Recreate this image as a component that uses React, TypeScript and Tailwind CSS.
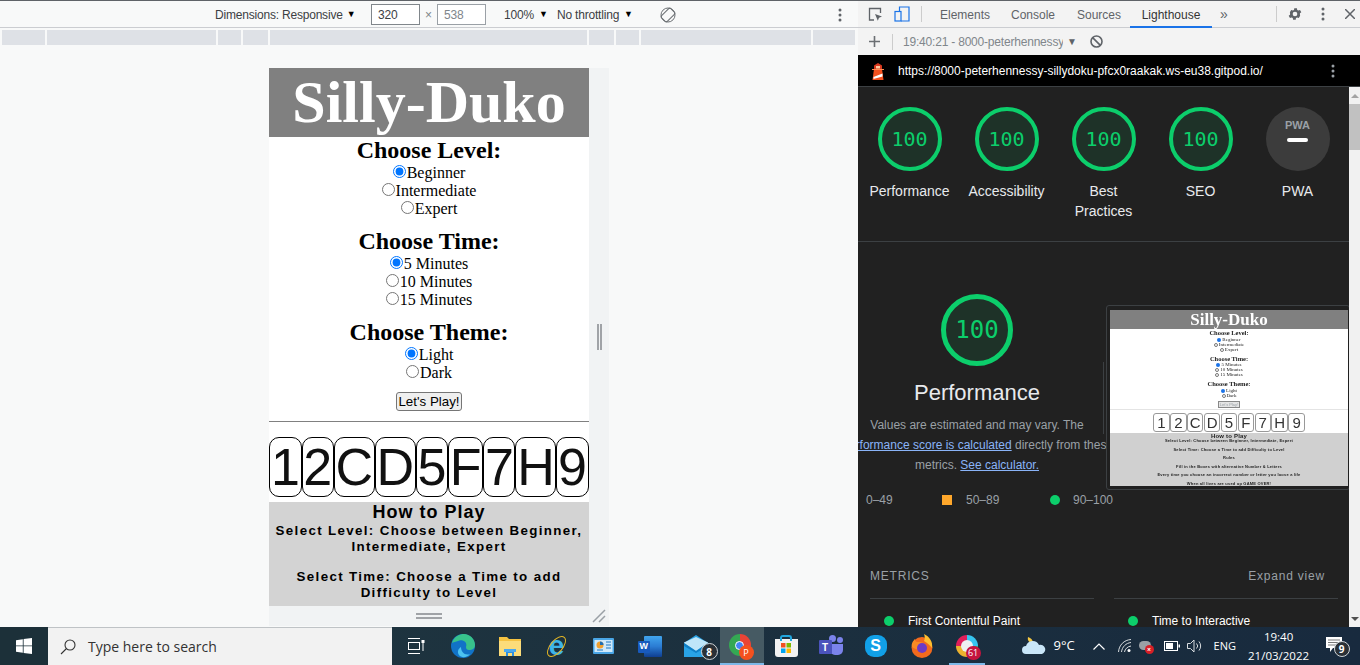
import React from "react";

const Dots = ({ color = "#5f6368" }: { color?: string }) => (
  <svg width="4" height="14" viewBox="0 0 4 14" fill={color}>
    <circle cx="2" cy="2" r="1.5" />
    <circle cx="2" cy="7" r="1.5" />
    <circle cx="2" cy="12" r="1.5" />
  </svg>
);

const Radio = ({ label, checked }: { label: string; checked?: boolean }) => (
  <div className="flex h-[18px] items-center justify-center">
    <input type="radio" checked={!!checked} readOnly className="-mt-[3px] h-[13px] w-[13px]" />
    <span className="ml-[1px]">{label}</span>
  </div>
);

const Group = ({ title, options, className }: { title: string; options: string[]; className?: string }) => (
  <div className={className}>
    <h2 className="h-[27px] text-center text-[24px] font-bold leading-[27px]">{title}</h2>
    {options.map((o, i) => (
      <Radio key={o} label={o} checked={i === 0} />
    ))}
  </div>
);

const tiles = ["1", "2", "C", "D", "5", "F", "7", "H", "9"];

const DevicePage = () => (
  <div className="h-[538px] w-[320px] overflow-hidden bg-white font-['Liberation_Serif',serif] text-[16px] text-black">
    <h1 className="flex h-[69px] items-center justify-center bg-[#808080] text-[60px] font-bold leading-[69px] text-white">
      Silly-Duko
    </h1>
    <Group title="Choose Level:" options={["Beginner", "Intermediate", "Expert"]} />
    <Group className="mt-[10px]" title="Choose Time:" options={["5 Minutes", "10 Minutes", "15 Minutes"]} />
    <Group className="mt-[10px]" title="Choose Theme:" options={["Light", "Dark"]} />
    <div className="mt-[10px] flex justify-center">
      <button className="h-[19px] w-[66px] rounded-[3px] border border-[#767676] bg-[#efefef] font-['Liberation_Sans',sans-serif] text-[13.33px] leading-[15px]">
        Let's Play!
      </button>
    </div>
    <div className="mt-[10px] h-px bg-[#808080]" />
    <div className="mt-[15px] flex h-[60px] justify-center font-['Liberation_Sans',sans-serif] text-[52px] leading-[58px] text-[#111]">
      {tiles.map((t) => (
        <span key={t} className="rounded-[10px] border border-black px-[0.7px] text-center">
          {t}
        </span>
      ))}
    </div>
    <div className="mt-[5px] h-[104px] overflow-hidden bg-[#d3d3d3] text-center font-['Liberation_Sans',sans-serif] font-bold tracking-[1.35px]">
      <h3 className="h-[21px] text-[18px] leading-[20px] tracking-[1px]">How to Play</h3>
      <p className="text-[13.33px] leading-[16px]">
        Select Level: Choose between Beginner,
        <br />
        Intermediate, Expert
      </p>
      <p className="mt-[14px] text-[13.33px] leading-[16px]">
        Select Time: Choose a Time to add
        <br />
        Difficulty to Level
      </p>
    </div>
  </div>
);

const mediaBars = ["w-[43px]", "w-[169px]", "w-[23px]", "w-[25px]", "w-[317px]", "w-[25px]", "w-[23px]", "w-[170px]", "w-[42px]"];

const LeftPane = () => (
  <div className="flex h-full w-[858px] flex-col border-t border-[#5f6368] bg-[#f8f9f9]">
    <div className="flex h-[27px] items-center border-b border-[#cbcdd1] pt-[1px] text-[12px] tracking-[-0.2px] text-[#3c4043]">
      <span className="ml-[215px] flex w-[156px] items-center gap-[4px]">
        Dimensions: Responsive <span className="text-[9px] text-black">▼</span>
      </span>
      <span className="flex h-[21px] w-[49px] items-center border border-[#80868b] bg-white pl-[6px]">320</span>
      <span className="w-[17px] text-center text-[#80868b]">×</span>
      <span className="flex h-[21px] w-[49px] items-center border border-[#9aa0a6] bg-white pl-[6px] text-[#80868b]">538</span>
      <span className="ml-[18px] flex w-[53px] items-center gap-[5px]">
        100% <span className="text-[9px] text-black">▼</span>
      </span>
      <span className="flex w-[103px] items-center gap-[5px]">
        No throttling <span className="text-[9px] text-black">▼</span>
      </span>
      <svg width="16" height="16" viewBox="0 0 16 16" fill="none" stroke="#6b6f73">
        <rect x="4" y="1.5" width="8" height="13" rx="1.5" transform="rotate(45 8 8)" />
        <circle cx="8" cy="8" r="7" />
      </svg>
      <span className="ml-[162px]">
        <Dots />
      </span>
    </div>
    <div className="mt-[2px] flex h-[15px] gap-[2px] pl-[2px]">
      {mediaBars.map((w, i) => (
        <div key={i} className={`${w} bg-[#dee1e6]`} />
      ))}
    </div>
    <div className="ml-[269px] mt-[23px] grid w-[340px] grid-cols-[320px_20px] grid-rows-[538px_20px]">
      <DevicePage />
      <div className="flex items-center justify-center gap-[1px] bg-[#f1f3f4]">
        <span className="h-[26px] w-[2px] bg-[#a0a3a7]" />
        <span className="h-[26px] w-[2px] bg-[#a0a3a7]" />
      </div>
      <div className="flex flex-col items-center justify-center gap-[2px] bg-[#f1f3f4]">
        <span className="h-[2px] w-[26px] bg-[#a0a3a7]" />
        <span className="h-[2px] w-[26px] bg-[#a0a3a7]" />
      </div>
      <div className="flex items-center justify-center bg-[#f1f3f4]">
        <svg width="14" height="14" viewBox="0 0 14 14" stroke="#9aa0a6" strokeWidth="1.5">
          <path d="M1 13 13 1M7 13l6-6" />
        </svg>
      </div>
    </div>
  </div>
);

const Gauge = ({ big }: { big?: boolean }) => (
  <div
    className={
      big
        ? "flex h-[72px] w-[72px] items-center justify-center rounded-full border-[5px] border-[#0cce6b] bg-[#0cce6b]/10 font-['DejaVu_Sans_Mono',monospace] text-[24px] text-[#0cce6b]"
        : "flex h-[64px] w-[64px] items-center justify-center rounded-full border-[4px] border-[#0cce6b] bg-[#0cce6b]/10 font-['DejaVu_Sans_Mono',monospace] text-[20px] text-[#0cce6b]"
    }
  >
    100
  </div>
);

const ScoreCol = ({ label, pwa }: { label: React.ReactNode; pwa?: boolean }) => (
  <div className="flex w-[97px] flex-col items-center">
    {pwa ? (
      <div className="flex h-[64px] w-[64px] flex-col items-center rounded-full bg-[#3c3c3c] pt-[12px]">
        <span className="text-[11px] font-bold leading-[12px] text-[#9aa0a6]">PWA</span>
        <span className="mt-[7px] h-[4px] w-[21px] rounded-full bg-white" />
      </div>
    ) : (
      <Gauge />
    )}
    <div className="mt-[10px] text-center text-[14px] leading-[20px] text-[#e8eaed]">{label}</div>
  </div>
);

const ThumbLine = ({ children, className }: { children: React.ReactNode; className: string }) => (
  <div className={`flex items-center justify-center whitespace-nowrap ${className}`}>{children}</div>
);

const ThumbRadio = ({ label, on }: { label: string; on?: boolean }) => (
  <ThumbLine className="h-[5px] text-[5px] text-[#222]">
    <span className={on ? "mr-[1px] h-[4px] w-[4px] rounded-full bg-[#1a73e8]" : "mr-[1px] h-[4px] w-[4px] rounded-full border-[0.5px] border-[#777]"} />
    {label}
  </ThumbLine>
);

const Thumbnail = () => (
  <div className="absolute left-[248px] top-[218px] h-[185px] w-[244px] rounded-[3px] border border-[#3c4043] bg-[#202020] pl-[3px] pt-[4px]">
    <div className="h-[176px] w-[238px] overflow-hidden bg-white blur-[0.3px]">
      <ThumbLine className="h-[19px] bg-[#808080] font-['Liberation_Serif',serif] text-[17px] font-bold text-white">Silly-Duko</ThumbLine>
      <div className="font-['Liberation_Serif',serif]">
        <ThumbLine className="h-[8px] text-[6.5px] font-bold text-[#222]">Choose Level:</ThumbLine>
        <ThumbRadio label="Beginner" on />
        <ThumbRadio label="Intermediate" />
        <ThumbRadio label="Expert" />
        <ThumbLine className="mt-[2.5px] h-[8px] text-[6.5px] font-bold text-[#222]">Choose Time:</ThumbLine>
        <ThumbRadio label="5 Minutes" on />
        <ThumbRadio label="10 Minutes" />
        <ThumbRadio label="15 Minutes" />
        <ThumbLine className="mt-[2.5px] h-[8px] text-[6.5px] font-bold text-[#222]">Choose Theme:</ThumbLine>
        <ThumbRadio label="Light" on />
        <ThumbRadio label="Dark" />
      </div>
      <ThumbLine className="mt-[3px]">
        <span className="border-[0.5px] border-[#888] bg-[#e4e4e4] px-[1px] font-['Liberation_Sans',sans-serif] text-[4px] leading-[5px]">Let's Play!</span>
      </ThumbLine>
      <div className="mt-[1px] h-px bg-[#e4e4e4]" />
      <div className="mt-[3px] flex h-[19px] justify-center gap-[0.4px] font-['Liberation_Sans',sans-serif] text-[15px] leading-[17px] text-[#333]">
        {tiles.map((t) => (
          <span key={t} className="w-[16.5px] rounded-[3px] border border-[#999] text-center">
            {t}
          </span>
        ))}
      </div>
      <div className="mt-[1px] h-[60px] bg-[#d0d0d0] text-center font-['Liberation_Sans',sans-serif] text-[4px] font-bold leading-[8.5px] tracking-[0.2px] text-[#222]">
        <div className="h-[4px] text-[6px] leading-[6px]">How to Play</div>
        <div>Select Level: Choose between Beginner, Intermediate, Expert</div>
        <div>Select Time: Choose a Time to add Difficulty to Level</div>
        <div>Rules</div>
        <div>Fill in the Boxes with alternative Number &amp; Letters</div>
        <div>Every time you choose an incorrect number or letter you loose a life</div>
        <div>When all lives are used up GAME OVER!</div>
      </div>
    </div>
  </div>
);

const Metric = ({ name }: { name: string }) => (
  <div className="w-[224px] border-t border-[#3c4043] pl-[14px] pt-[14px]">
    <div className="flex items-center gap-[14px] text-[12px] leading-[16px] text-white">
      <span className="h-[10px] w-[10px] rounded-full bg-[#0cce6b]" />
      {name}
    </div>
  </div>
);

const RightPane = () => (
  <div className="flex h-full w-[502px] flex-col border-t border-[#5f6368] font-['Liberation_Sans',sans-serif]">
    {/* devtools tabs */}
    <div className="flex h-[27px] items-center border-b border-[#cbcdd1] bg-[#f3f3f3] text-[12px] text-[#5f6368]">
      <svg className="ml-[10px]" width="15" height="15" viewBox="0 0 15 15" fill="none">
        <path d="M6 13H1.5V1.5h11V6" stroke="#5f6368" strokeWidth="1.3" />
        <path d="M7 7l7 2.5-3 1.2-1.2 3z" fill="#5f6368" />
      </svg>
      <svg className="ml-[11px]" width="16" height="16" viewBox="0 0 16 16" fill="none" stroke="#1a73e8" strokeWidth="1.2">
        <path d="M5.5 5V1h9.5v14H7" />
        <rect x="1" y="5.5" width="6" height="9.5" />
      </svg>
      <span className="ml-[11px] h-[16px] w-px bg-[#ccc]" />
      <span className="ml-[18px] w-[71px] pt-[2px]">Elements</span>
      <span className="w-[66px] pt-[2px]">Console</span>
      <span className="w-[53px] pt-[2px]">Sources</span>
      <span className="flex h-[27px] w-[82px] items-center justify-center border-b-2 border-[#1a73e8] pt-[3px] text-[#333]">Lighthouse</span>
      <span className="ml-[8px] w-[56px] text-[14px] leading-[14px]">»</span>
      <span className="h-[16px] w-px bg-[#ccc]" />
      <svg className="ml-[10px]" width="16" height="16" viewBox="0 0 24 24" fill="#5f6368">
        <path d="M19.4 13a7.6 7.6 0 0 0 0-2l2.1-1.6-2-3.5-2.5 1a7.6 7.6 0 0 0-1.7-1l-.4-2.6h-4l-.4 2.6a7.6 7.6 0 0 0-1.7 1l-2.5-1-2 3.5L4.600 11a7.600 7.600 0 0 0 0 2l-2.100 1.600 2 3.500 2.500-1a7.600 7.600 0 0 0 1.700 1l.4 2.600h4l.4-2.600a7.600 7.600 0 0 0 1.700-1l2.500 1 2-3.500zM12 15.500a3.500 3.500 0 1 1 0-7 3.500 3.500 0 0 1 0 7z" />
      </svg>
      <span className="ml-[18px]">
        <Dots />
      </span>
      <svg className="ml-[20px]" width="10" height="10" viewBox="0 0 10 10" stroke="#5f6368" strokeWidth="1.5">
        <path d="M0 0l10 10M10 0 0 10" />
      </svg>
    </div>
    {/* report picker */}
    <div className="flex h-[27px] items-center bg-[#f3f3f3] text-[12px] text-[#80868b]">
      <svg className="ml-[11px]" width="11" height="11" viewBox="0 0 11 11" stroke="#6b6f73" strokeWidth="1.6">
        <path d="M5.500 0v11M0 5.500h11" />
      </svg>
      <span className="ml-[12px] h-[16px] w-px bg-[#ccc]" />
      <span className="ml-[10px] w-[160px] overflow-hidden whitespace-nowrap tracking-[-0.2px]">19:40:21 - 8000-peterhennessy</span>
      <span className="ml-[4px] text-[10px] text-[#5f6368]">▼</span>
      <svg className="ml-[13px]" width="13" height="13" viewBox="0 0 13 13" fill="none" stroke="#5f6368" strokeWidth="1.6">
        <circle cx="6.500" cy="6.500" r="5.500" />
        <path d="M2.600 2.600l7.800 7.800" />
      </svg>
    </div>
    {/* url bar */}
    <div className="flex h-[32px] items-center border-b border-[#3c4043] bg-black text-[12px] text-white">
      <svg className="ml-[13px]" width="14" height="18" viewBox="0 0 14 18">
        <path d="M1.500 18 3 7h8l1.500 11z" fill="#f4511e" />
        <path d="M3 7V3.500L7 1l4 2.500V7z" fill="#d9381e" />
        <rect x="5" y="4" width="4" height="2.500" fill="#ffca9e" />
        <path d="M1 7h12v1H1z" fill="#ff8a50" />
        <path d="M2.500 15 11.500 11.500v3L2.500 17z" fill="#fff" />
      </svg>
      <span className="ml-[13px] w-[433px] whitespace-nowrap">https://8000-peterhennessy-sillydoku-pfcx0raakak.ws-eu38.gitpod.io/</span>
      <Dots color="#9aa0a6" />
    </div>
    {/* report */}
    <div className="flex min-h-0 flex-1">
      <div className="relative w-[491px] overflow-hidden bg-[#212121] text-[#9aa0a6]">
        <div className="flex h-[155px] border-b border-[#3c4043] pl-[3px] pt-[20px]">
          <ScoreCol label="Performance" />
          <ScoreCol label="Accessibility" />
          <ScoreCol
            label={
              <>
                Best
                <br />
                Practices
              </>
            }
          />
          <ScoreCol label="SEO" />
          <ScoreCol label="PWA" pwa />
        </div>
        <div className="flex w-[238px] flex-col items-center pt-[52px]">
          <Gauge big />
          <div className="mt-[14px] text-[22px] leading-[26px] text-[#e8eaed]">Performance</div>
          <div className="mt-[9px] w-full text-[12px] leading-[20px]">
            <div className="flex justify-center whitespace-nowrap">Values are estimated and may vary. The</div>
            <div className="flex justify-center whitespace-nowrap">
              <span>
                <a className="text-[#8ab4f8] underline">Performance score is calculated</a> directly from these
              </span>
            </div>
            <div className="flex justify-center whitespace-nowrap">
              <span>
                metrics. <a className="text-[#8ab4f8] underline">See calculator.</a>
              </span>
            </div>
          </div>
        </div>
        <div className="mt-[15px] flex h-[20px] items-center whitespace-nowrap pl-[8px] text-[12px]">
          <span className="w-[76px]">0–49</span>
          <span className="h-[10px] w-[10px] bg-[#ffa72b]" />
          <span className="ml-[14px] w-[84px]">50–89</span>
          <span className="h-[10px] w-[10px] rounded-full bg-[#0cce6b]" />
          <span className="ml-[13px]">90–100</span>
        </div>
        <div className="mt-[57px] flex items-center justify-between pl-[12px] pr-[24px] text-[12px] leading-[18px] tracking-[0.8px] text-[#9aa0a6]">
          <span>METRICS</span>
          <span>Expand view</span>
        </div>
        <div className="ml-[12px] mt-[13px] flex gap-[20px]">
          <Metric name="First Contentful Paint" />
          <Metric name="Time to Interactive" />
        </div>
        <div className="absolute left-[245px] top-[275px] h-[72px] w-px bg-[#3c4043]" />
        <Thumbnail />
      </div>
      <div className="flex w-[11px] flex-col justify-between bg-[#f1f1f1]">
        <div>
          <div className="flex h-[17px] items-center justify-center">
            <span className="border-x-[4px] border-b-[4px] border-x-transparent border-b-[#a3a3a3]" />
          </div>
          <div className="h-[46px] bg-[#c1c1c1]" />
        </div>
        <div className="flex h-[17px] items-center justify-center">
          <span className="border-x-[4px] border-t-[4px] border-x-transparent border-t-[#505050]" />
        </div>
      </div>
    </div>
  </div>
);

const Badge = ({ n, className }: { n: string; className?: string }) => (
  <span className={`absolute flex items-center justify-center rounded-full border border-[#cfd4d8] bg-[#2a3036] text-[10px] font-bold leading-none text-white ${className ?? ""}`}>
    {n}
  </span>
);

const Cell = ({ children, className }: { children: React.ReactNode; className: string }) => (
  <div className={`relative flex h-full items-center justify-center ${className}`}>{children}</div>
);

const Taskbar = () => (
  <div className="flex h-[38px] items-center bg-gradient-to-r from-[#20373f] to-[#182a3e] font-['Open_Sans',sans-serif] text-white">
    <div className="flex h-full w-[48px] items-center justify-center bg-[#1c3039]">
      <svg width="16" height="16" viewBox="0 0 16 16" fill="#fff">
        <path d="M0 2.200 6.800 1.200V7.500H0zM7.600 1.100 16 0v7.500H7.600zM0 8.300h6.800v6.500L0 13.800zM7.600 8.300H16V16l-8.400-1.100z" />
      </svg>
    </div>
    <div className="flex h-full w-[344px] items-center border-t border-[#bfc3c6] bg-[#f2f2f2] pl-[12px] text-[14px] text-[#333]">
      <svg width="16" height="16" viewBox="0 0 16 16" fill="none" stroke="#333" strokeWidth="1.100">
        <circle cx="10" cy="6" r="5" />
        <path d="M6.500 9.500 1 15" />
      </svg>
      <span className="ml-[12px]">Type here to search</span>
    </div>
    <div className="flex h-full w-[48px] items-center justify-center">
      <svg width="17" height="16" viewBox="0 0 17 16" fill="none" stroke="#fff">
        <path d="M0 .5h12M0 15.500h12M15 3v10" />
        <rect x=".5" y="4.500" width="11" height="7" />
        <rect x="13.500" y="2" width="3" height="3" fill="#fff" stroke="none" />
      </svg>
    </div>
    <Cell className="w-[46.6px]">
      <svg width="24" height="24" viewBox="0 0 24 24">
        <circle cx="12" cy="12" r="12" fill="#1173c7" />
        <path d="M1 9C3 2 9 0 13 0c6 0 11 5 11 11 0 4-3 5-6 5-2 0-3-1-3-3 2-5-4-8-8-6-2 1-5 1-6 2z" fill="#38c28b" />
        <path d="M10 13c0 5 4 9 9 7-3 4-9 4-11 1-2-3-1-6 2-8z" fill="#4cc2f0" />
      </svg>
    </Cell>
    <Cell className="w-[46.6px]">
      <svg width="22" height="20" viewBox="0 0 22 20">
        <path d="M0 1h8l2 2h12v17H0z" fill="#f5c342" />
        <path d="M0 5h22v15H0z" fill="#fbdc7a" />
        <path d="M7 20v-7h8v7h-2v-3H9v3z" fill="#2c8fe0" />
        <path d="M5 13h12v3H5z" fill="#4aa8ee" />
      </svg>
    </Cell>
    <Cell className="w-[46.6px]">
      <div className="relative flex h-[24px] w-[24px] items-center justify-center">
        <span className="absolute h-[25px] w-[13px] rotate-[40deg] rounded-[50%] border border-[#e8b923]" />
        <span className="font-['Liberation_Sans',sans-serif] text-[28px] font-bold leading-[24px] text-[#3db4e8]">e</span>
      </div>
    </Cell>
    <Cell className="w-[46.6px]">
      <svg width="21" height="16" viewBox="0 0 21 16">
        <rect width="21" height="16" rx="1" fill="#4aa6e6" />
        <rect x="1.500" y="2" width="18" height="12" fill="#cfe9fa" />
        <circle cx="7" cy="7" r="3.500" fill="#f0a030" />
        <path d="M7 7V3.500A3.500 3.500 0 0 1 10.500 7z" fill="#1f6fb5" />
        <path d="M13 4h5M13 7h5M13 10h5M4 12h6" stroke="#1f78c2" />
      </svg>
    </Cell>
    <Cell className="w-[46.6px]">
      <div className="relative h-[21px] w-[24px]">
        <div className="absolute right-0 top-0 h-[21px] w-[18px] rounded-[1px] bg-gradient-to-b from-[#41a5ee] via-[#2b7cd3] to-[#103f91]" />
        <div className="absolute left-0 top-[5px] flex h-[12px] w-[12px] items-center justify-center rounded-[1px] bg-[#185abd] font-['Liberation_Sans',sans-serif] text-[9px] font-bold text-white">W</div>
      </div>
    </Cell>
    <Cell className="w-[46.6px]">
      <svg width="24" height="22" viewBox="0 0 24 22">
        <path d="M0 8 12 0l12 8v14H0z" fill="#29a3e6" />
        <path d="M0 8l12 8 12-8v-.5L12 2 0 7.500z" fill="#bfe6f9" />
        <path d="M0 8l12 8 12-8v3l-12 7L0 11z" fill="#0f7fc6" />
      </svg>
      <Badge n="8" className="bottom-[5px] right-[2px] h-[17px] w-[17px]" />
    </Cell>
    <Cell className="w-[44px] border-b-2 border-[#7cb8e8] bg-[#465a63]">
      <div className="mr-[4px] flex h-[22px] w-[22px] items-center justify-center rounded-full bg-[conic-gradient(#ea4335_0_33%,#fbbc05_33%_50%,#34a853_50%_100%)]">
        <span className="h-[9px] w-[9px] rounded-full border border-white bg-[#4285f4]" />
      </div>
      <span className="absolute left-[19px] top-[18px] flex h-[15px] w-[15px] items-center justify-center rounded-full bg-[#f4511e] text-[9px] text-white">P</span>
    </Cell>
    <Cell className="w-[45px]">
      <div className="relative mt-[3px] flex h-[18px] w-[23px] items-center justify-center rounded-b-[3px] bg-[#f2f2f2]">
        <span className="absolute -top-[4px] h-[6px] w-[12px] rounded-t-[3px] border-x-2 border-t-2 border-[#22a7e0]" />
        <svg width="10" height="10" viewBox="0 0 10 10">
          <rect width="4.500" height="4.500" fill="#f25022" />
          <rect x="5.500" width="4.500" height="4.500" fill="#7fba00" />
          <rect y="5.500" width="4.500" height="4.500" fill="#00a4ef" />
          <rect x="5.500" y="5.500" width="4.500" height="4.500" fill="#ffb900" />
        </svg>
      </div>
    </Cell>
    <Cell className="w-[44px]">
      <div className="relative h-[22px] w-[24px]">
        <span className="absolute right-0 top-[2px] h-[6px] w-[6px] rounded-full bg-[#7b83eb]" />
        <span className="absolute left-[10px] top-0 h-[7px] w-[7px] rounded-full bg-[#7b83eb]" />
        <span className="absolute right-0 top-[9px] h-[11px] w-[13px] rounded-b-[5px] bg-[#7b83eb]" />
        <span className="absolute left-0 top-[5px] flex h-[14px] w-[13px] items-center justify-center rounded-[1px] bg-[#4b53bc] font-['Liberation_Sans',sans-serif] text-[10px] font-bold text-white">T</span>
      </div>
    </Cell>
    <Cell className="w-[46px]">
      <div className="flex h-[22px] w-[22px] items-center justify-center rounded-[9px] bg-[#11a0e8] font-['Liberation_Sans',sans-serif] text-[16px] font-bold text-white">S</div>
    </Cell>
    <Cell className="w-[46px]">
      <svg width="24" height="24" viewBox="0 0 24 24">
        <circle cx="12" cy="13.500" r="10.500" fill="#f36a1d" />
        <path d="M14 0c6 3 9 8 8 14-2-2-4-5-8-7 1-2 1-4 0-7z" fill="#ffbd2e" />
        <path d="M2 13C1 10 3 7 5 5c0 3 2 3 4 3 4 0 7 2 7 6 0 0-5 5-14-1z" fill="#fb8b24" />
        <circle cx="12" cy="14" r="5" fill="#6e3bc4" />
      </svg>
    </Cell>
    <Cell className="w-[44px] after:absolute after:bottom-0 after:left-[4px] after:right-[4px] after:h-[2px] after:bg-[#7cb8e8]">
      <div className="h-[22px] w-[22px] rounded-full bg-[conic-gradient(#36c5f0_0_25%,#2eb67d_25%_50%,#ecb22e_50%_75%,#e01e5a_75%_100%)] p-[5px]">
        <div className="h-full w-full rounded-full bg-[#eef1f1]" />
      </div>
      <span className="absolute left-[21px] top-[19px] flex h-[14px] w-[15px] items-center justify-center rounded-full bg-[#c4143f] text-[9px] text-white">61</span>
    </Cell>
    {/* tray */}
    <svg className="ml-[33px]" width="24" height="20" viewBox="0 0 24 20">
      <path d="M6 1c3 1 5 3 5 6-3 0-6-2-5-6z" fill="#f5c842" />
      <path d="M4 18a4 4 0 0 1 0-8 7 7 0 0 1 13-1 4.500 4.500 0 0 1 3 9z" fill="#c9e6f8" />
    </svg>
    <span className="ml-[8px] w-[21px] whitespace-nowrap text-[13px]">9°C</span>
    <svg className="ml-[18px]" width="12" height="7" viewBox="0 0 12 7" fill="none" stroke="#fff" strokeWidth="1.200">
      <path d="M.5 6.500 6 1l5.500 5.500" />
    </svg>
    <svg className="ml-[13px]" width="14" height="14" viewBox="0 0 14 14" fill="none" stroke="#d7dbde">
      <path d="M.5 13C1 6 6 1 13 .5M3.500 13C4 8 8 4 13 3.500M6.500 13c.4-3 3-5.500 6.500-6" />
      <circle cx="11" cy="11.500" r="1.500" fill="#fff" stroke="none" />
    </svg>
    <div className="relative ml-[7px] h-[14px] w-[15px]">
      <span className="absolute left-0 top-[2px] h-[9px] w-[12px] rounded-full bg-[#9aa0a6]" />
      <span className="absolute -bottom-[1px] right-0 flex h-[9px] w-[9px] items-center justify-center rounded-full bg-[#d81f26] text-[7px] font-bold leading-none text-white">×</span>
    </div>
    <svg className="ml-[10px]" width="16" height="10" viewBox="0 0 16 10" fill="none">
      <rect x=".5" y=".5" width="13" height="9" stroke="#fff" />
      <rect x="2" y="2" width="7" height="6" fill="#fff" />
      <rect x="14.500" y="3.500" width="1.500" height="3" fill="#fff" />
    </svg>
    <svg className="ml-[7px]" width="16" height="14" viewBox="0 0 16 14" fill="none" stroke="#d7dbde">
      <path d="M.5 4.500h3L7 1v12L3.500 9.500h-3zM9.500 4.500a3.500 3.500 0 0 1 0 5M12 2.500a7 7 0 0 1 0 9" />
    </svg>
    <span className="ml-[11px] w-[23px] text-[11px]">ENG</span>
    <div className="ml-[15px] flex w-[54px] flex-col items-center whitespace-nowrap text-[11.5px] leading-[19px]">
      <div>19:40</div>
      <div>21/03/2022</div>
    </div>
    <div className="relative ml-[20px] h-[22px] w-[24px]">
      <svg className="absolute left-0 top-[2px]" width="16" height="15" viewBox="0 0 16 15">
        <path d="M0 0h16v11H7l-3 4v-4H0z" fill="#fff" />
        <path d="M2 3h12M2 5.500h12M2 8h9" stroke="#555" strokeWidth=".8" />
      </svg>
      <Badge n="9" className="bottom-0 right-0 h-[16px] w-[16px]" />
    </div>
  </div>
);

export default function App() {
  return (
    <div className="flex h-[665px] w-[1360px] flex-col overflow-hidden bg-white font-['Liberation_Sans',sans-serif]">
      <div className="flex h-[627px]">
        <LeftPane />
        <RightPane />
      </div>
      <Taskbar />
    </div>
  );
}
